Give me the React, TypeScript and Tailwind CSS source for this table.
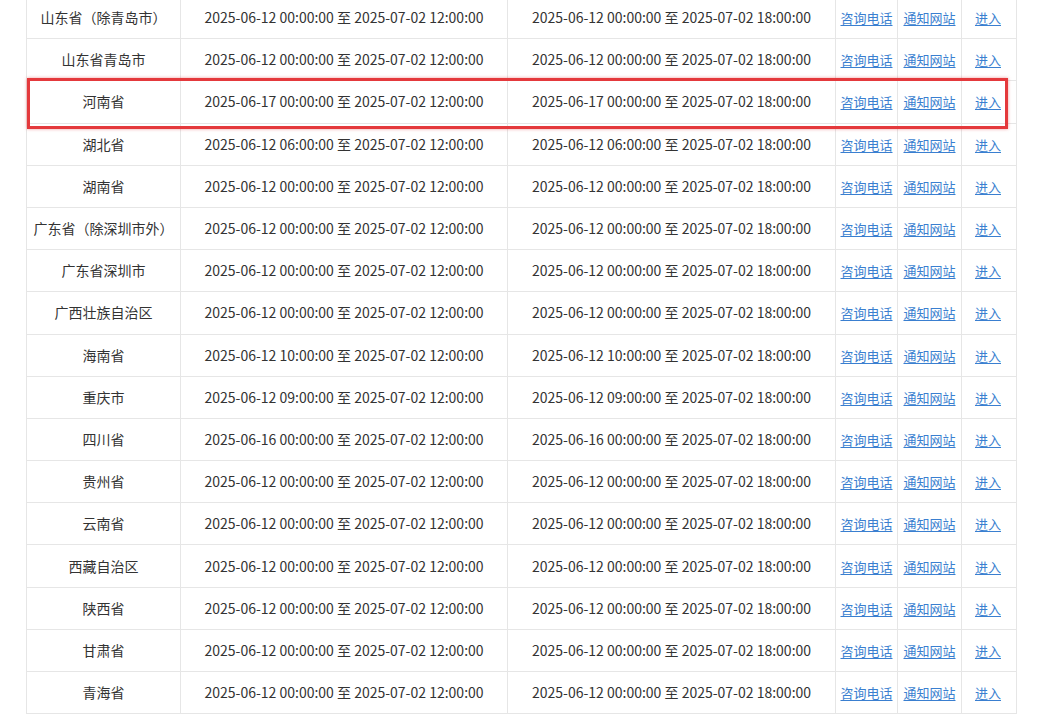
import React from 'react';

type Row = { name: string; start: string; end1: string; end2: string };

const rows: Row[] = [
  { name: '山东省（除青岛市）', start: '2025-06-12 00:00:00', end1: '12:00:00', end2: '18:00:00' },
  { name: '山东省青岛市', start: '2025-06-12 00:00:00', end1: '12:00:00', end2: '18:00:00' },
  { name: '河南省', start: '2025-06-17 00:00:00', end1: '12:00:00', end2: '18:00:00' },
  { name: '湖北省', start: '2025-06-12 06:00:00', end1: '12:00:00', end2: '18:00:00' },
  { name: '湖南省', start: '2025-06-12 00:00:00', end1: '12:00:00', end2: '18:00:00' },
  { name: '广东省（除深圳市外）', start: '2025-06-12 00:00:00', end1: '12:00:00', end2: '18:00:00' },
  { name: '广东省深圳市', start: '2025-06-12 00:00:00', end1: '12:00:00', end2: '18:00:00' },
  { name: '广西壮族自治区', start: '2025-06-12 00:00:00', end1: '12:00:00', end2: '18:00:00' },
  { name: '海南省', start: '2025-06-12 10:00:00', end1: '12:00:00', end2: '18:00:00' },
  { name: '重庆市', start: '2025-06-12 09:00:00', end1: '12:00:00', end2: '18:00:00' },
  { name: '四川省', start: '2025-06-16 00:00:00', end1: '12:00:00', end2: '18:00:00' },
  { name: '贵州省', start: '2025-06-12 00:00:00', end1: '12:00:00', end2: '18:00:00' },
  { name: '云南省', start: '2025-06-12 00:00:00', end1: '12:00:00', end2: '18:00:00' },
  { name: '西藏自治区', start: '2025-06-12 00:00:00', end1: '12:00:00', end2: '18:00:00' },
  { name: '陕西省', start: '2025-06-12 00:00:00', end1: '12:00:00', end2: '18:00:00' },
  { name: '甘肃省', start: '2025-06-12 00:00:00', end1: '12:00:00', end2: '18:00:00' },
  { name: '青海省', start: '2025-06-12 00:00:00', end1: '12:00:00', end2: '18:00:00' },
];

const cell = 'border border-[#e6e6e6] text-center align-middle h-[42.19px] p-0 whitespace-nowrap';
const link = 'text-[13px] text-[#3a7fd0] underline underline-offset-2';

export default function App() {
  return (
    <div
      className="relative w-[1039px] h-[715px] overflow-hidden bg-white text-[14px] text-[#333]"
      style={{ fontFamily: '"Noto Sans CJK SC", "Noto Sans", sans-serif' }}
    >
      <div className="mt-[-4px] ml-[26px] w-[990px]">
        <table className="w-full border-collapse table-fixed">
          <colgroup>
            <col className="w-[154px]" />
            <col className="w-[327px]" />
            <col className="w-[328px]" />
            <col className="w-[62px]" />
            <col className="w-[64px]" />
            <col className="w-[55px]" />
          </colgroup>
          <tbody>
            {rows.map((r) => (
              <tr key={r.name}>
                <td className={cell}>{r.name}</td>
                <td className={cell}>
                  {r.start} 至 2025-07-02 {r.end1}
                </td>
                <td className={cell}>
                  {r.start} 至 2025-07-02 {r.end2}
                </td>
                <td className={cell}>
                  <a className={link}>咨询电话</a>
                </td>
                <td className={cell}>
                  <a className={link}>通知网站</a>
                </td>
                <td className={`${cell} pr-[2px]`}>
                  <a className={link}>进入</a>
                </td>
              </tr>
            ))}
          </tbody>
        </table>
      </div>
      {/* highlight box over the 河南省 row */}
      <div className="absolute left-[27px] top-[78px] w-[981px] h-[51px] border-[3px] border-[#e4393c] shadow-[0_0_3px_rgba(228,57,60,0.5)] pointer-events-none" />
    </div>
  );
}
